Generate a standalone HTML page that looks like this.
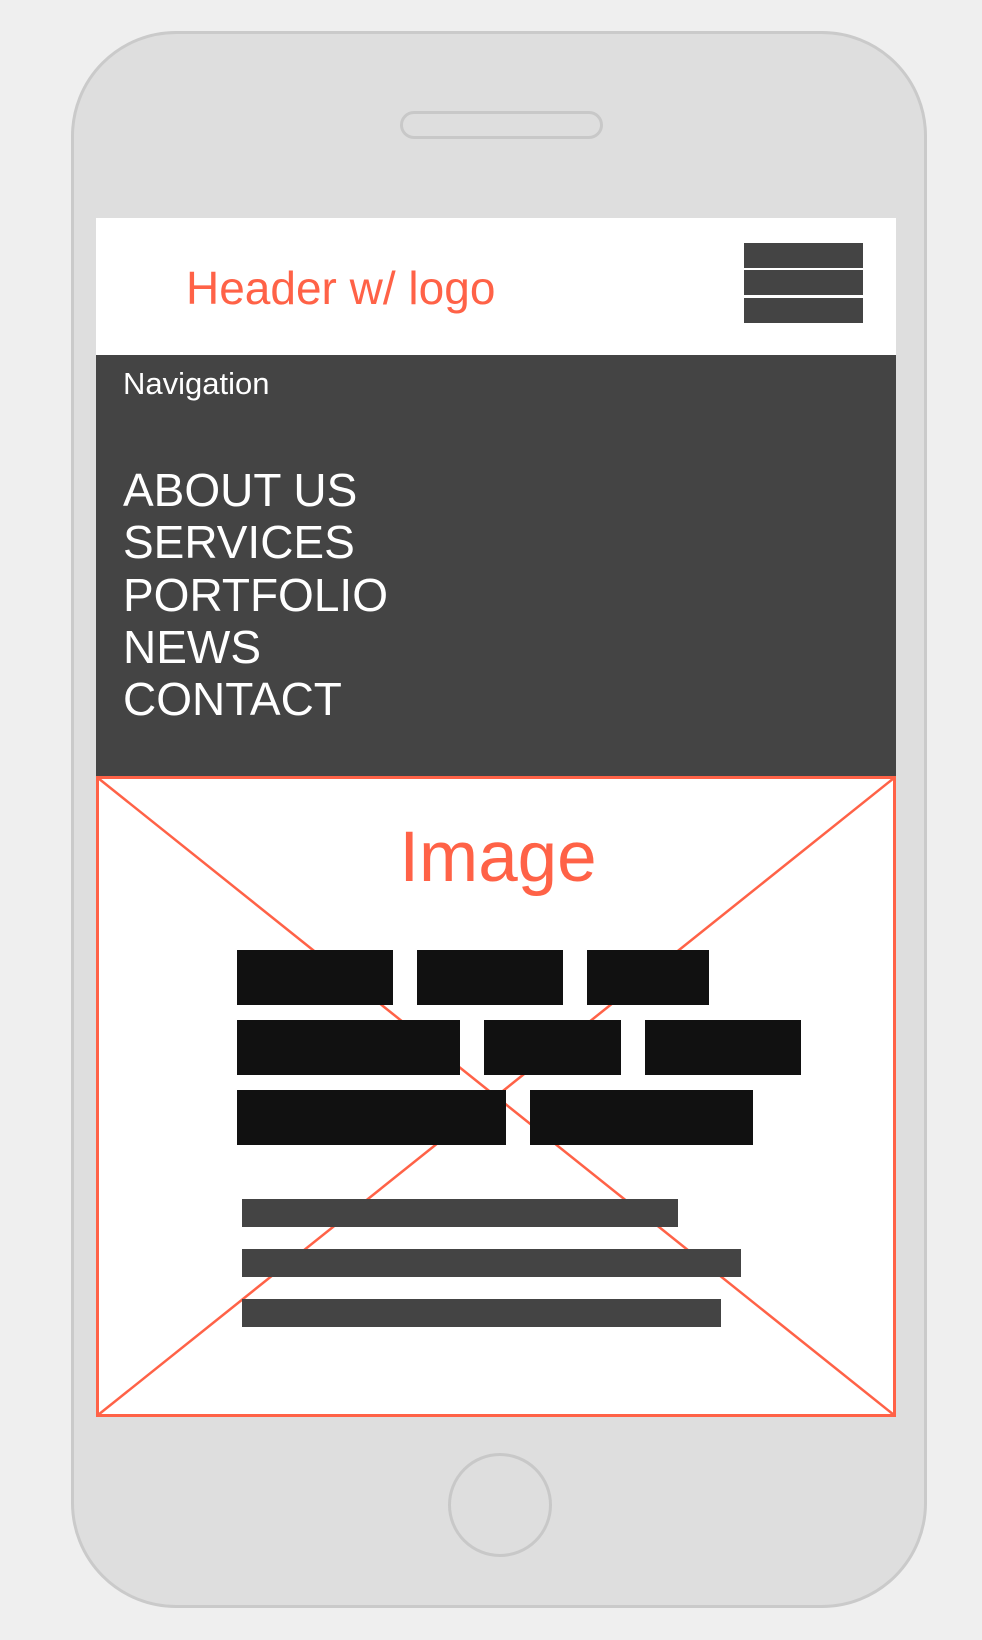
<!DOCTYPE html>
<html><head><meta charset="utf-8"><style>
*{margin:0;padding:0;box-sizing:border-box}
body{width:982px;height:1640px;background:#efefef;position:relative;overflow:hidden;font-family:"Liberation Sans",sans-serif}
.a{position:absolute}
.phone{left:71px;top:31px;width:856px;height:1577px;background:#dedede;border:3px solid #cacaca;border-radius:105px}
.bk{background:#111}
.gr{background:#444}
</style></head><body>
<div class="a phone"></div>
<div class="a" style="left:400px;top:111px;width:203px;height:28px;border:3px solid #c8c8c8;border-radius:14px;background:#dedede"></div>
<div class="a" style="left:96px;top:218px;width:800px;height:138px;background:#fff"></div>
<div class="a" style="left:186px;top:262px;font-size:46px;line-height:52px;color:#ff6247">Header w/ logo</div>
<div class="a gr" style="left:744px;top:243px;width:119px;height:25px"></div>
<div class="a gr" style="left:744px;top:270px;width:119px;height:25px"></div>
<div class="a gr" style="left:744px;top:298px;width:119px;height:25px"></div>
<div class="a" style="left:96px;top:355px;width:800px;height:421px;background:#444"></div>
<div class="a" style="left:123px;top:366px;font-size:31px;line-height:36px;color:#fff">Navigation</div>
<div class="a" style="left:123px;top:464px;font-size:46px;line-height:52.3px;color:#fff">ABOUT US<br>SERVICES<br>PORTFOLIO<br>NEWS<br>CONTACT</div>
<div class="a" style="left:96px;top:776px;width:800px;height:641px;background:#fff;border:3px solid #ff6247"></div>
<svg class="a" style="left:96px;top:776px" width="800" height="641"><line x1="2" y1="2" x2="798" y2="639" stroke="#ff6247" stroke-width="2.5"/><line x1="798" y1="2" x2="2" y2="639" stroke="#ff6247" stroke-width="2.5"/></svg>
<div class="a bk" style="left:237px;top:950px;width:156px;height:55px"></div>
<div class="a bk" style="left:417px;top:950px;width:146px;height:55px"></div>
<div class="a bk" style="left:587px;top:950px;width:122px;height:55px"></div>
<div class="a bk" style="left:237px;top:1020px;width:223px;height:55px"></div>
<div class="a bk" style="left:484px;top:1020px;width:137px;height:55px"></div>
<div class="a bk" style="left:645px;top:1020px;width:156px;height:55px"></div>
<div class="a bk" style="left:237px;top:1090px;width:269px;height:55px"></div>
<div class="a bk" style="left:530px;top:1090px;width:223px;height:55px"></div>
<div class="a" style="left:300px;top:816px;width:396px;text-align:center;font-size:71px;line-height:84px;color:#ff6247">Image</div>
<div class="a gr" style="left:242px;top:1199px;width:436px;height:28px"></div>
<div class="a gr" style="left:242px;top:1249px;width:499px;height:28px"></div>
<div class="a gr" style="left:242px;top:1299px;width:479px;height:28px"></div>
<div class="a" style="left:448px;top:1453px;width:104px;height:104px;border:3px solid #c8c8c8;border-radius:50%"></div>
</body></html>
